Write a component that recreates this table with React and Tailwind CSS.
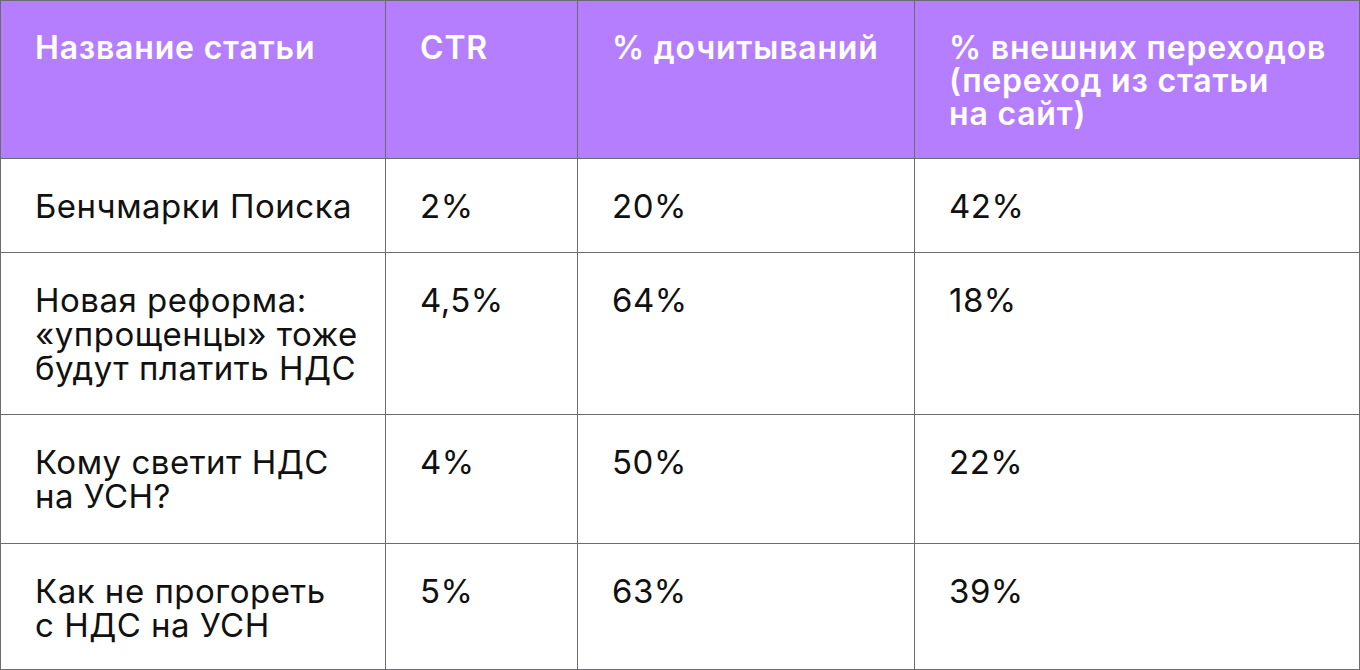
import React from "react";

const headers = [
  "Название статьи",
  "CTR",
  "% дочитываний",
  <>
    % внешних переходов
    <br />
    (переход из статьи
    <br />
    на сайт)
  </>,
];

const rows = [
  [<>Бенчмарки Поиска</>, "2%", "20%", "42%"],
  [
    <>
      Новая реформа:
      <br />
      «упрощенцы» тоже
      <br />
      будут платить НДС
    </>,
    "4,5%",
    "64%",
    "18%",
  ],
  [
    <>
      Кому светит НДС
      <br />
      на УСН?
    </>,
    "4%",
    "50%",
    "22%",
  ],
  [
    <>
      Как не прогореть
      <br />с НДС на УСН
    </>,
    "5%",
    "63%",
    "39%",
  ],
];

export default function App() {
  return (
    <div
      className="w-[1360px] h-[670px] bg-white"
      style={{ fontFamily: "Inter, 'Noto Sans', sans-serif" }}
    >
      <div className="grid grid-cols-[384px_191px_336px_444px] grid-rows-[157px_93px_161px_128px_125px] gap-px p-px bg-[#6b6b72]">
        {headers.map((h, i) => (
          <div
            key={i}
            className="bg-[#b57eff] pl-[34px] pt-[30px] text-white font-semibold text-[32px] leading-[33px] tracking-[0.8px]"
          >
            {h}
          </div>
        ))}
        {rows.map((r, ri) =>
          r.map((c, ci) => (
            <div
              key={ri + "-" + ci}
              className="bg-white pl-[34px] pt-[30px] text-[#111] text-[33px] leading-[34px] tracking-[0.5px]"
            >
              {c}
            </div>
          ))
        )}
      </div>
    </div>
  );
}
